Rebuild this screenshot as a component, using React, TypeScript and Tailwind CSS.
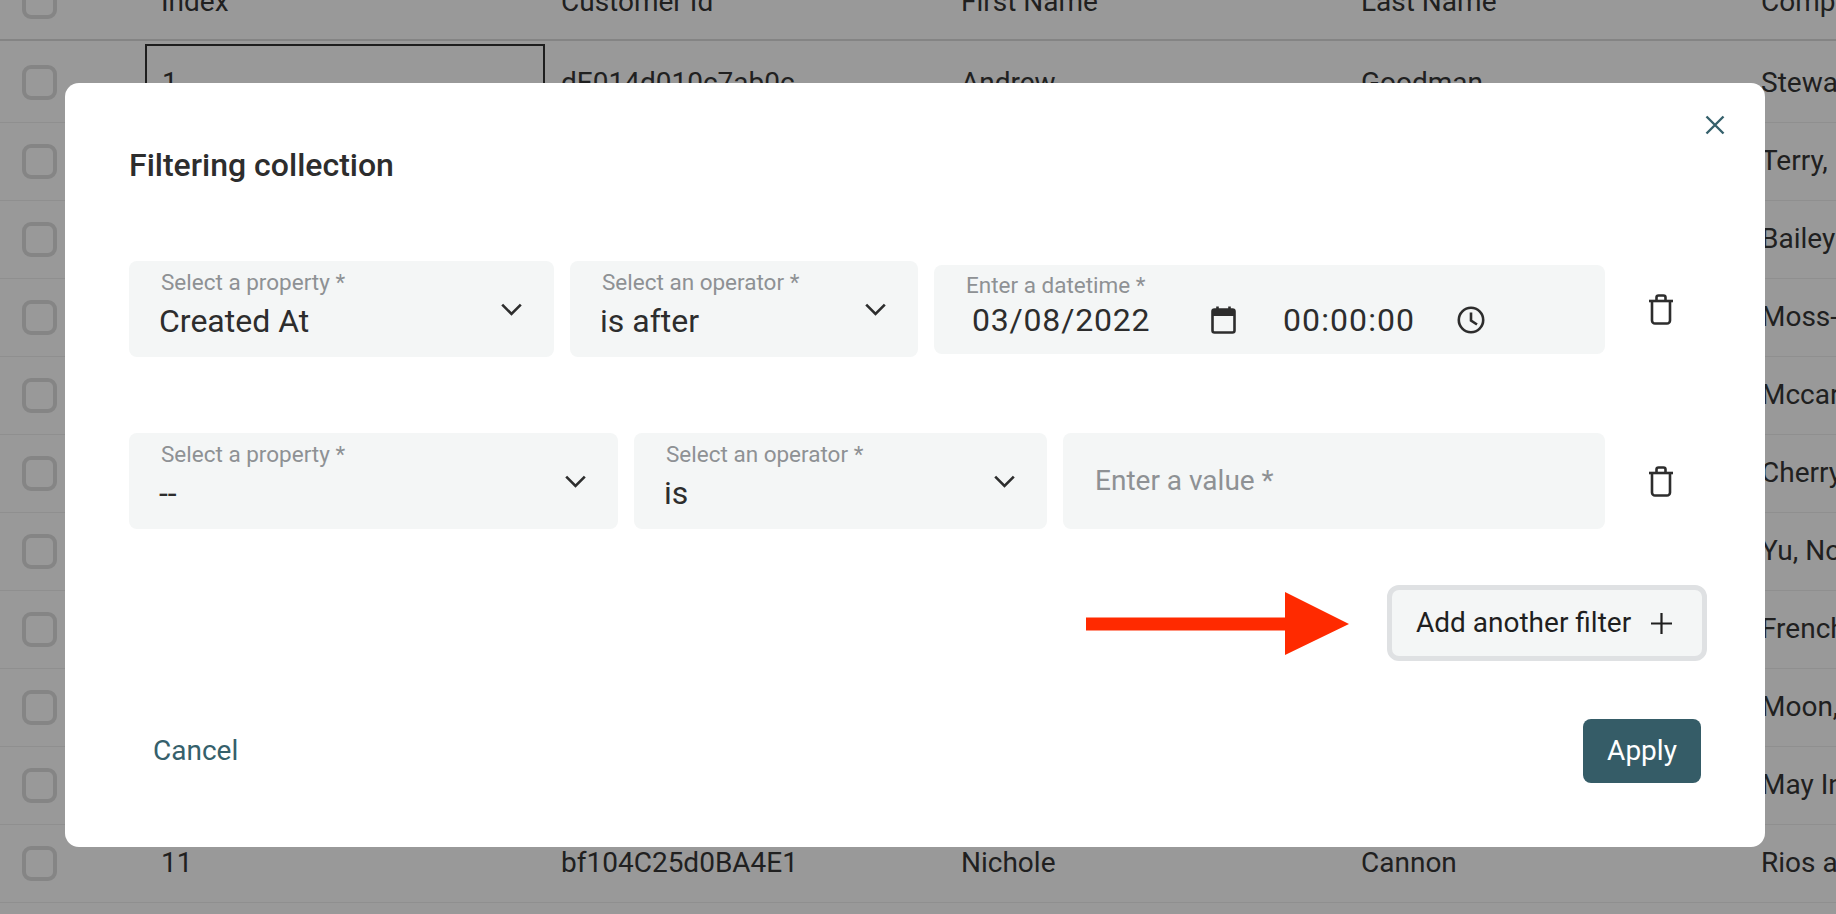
import React from "react"

const rows = [
    { index: "1", customerId: "dE014d010c7ab0c", first: "Andrew", last: "Goodman", company: "Stewart-Flynn" },
    { index: "2", customerId: "2B54172c8b65eC3", first: "Alvin", last: "Lane", company: "Terry, Proctor and Lawrence" },
    { index: "3", customerId: "d794Dd48988d2ac", first: "Jenna", last: "Harding", company: "Bailey Group" },
    { index: "4", customerId: "3b3Aa4aCc68f3Be", first: "Fernando", last: "Ford", company: "Moss-Maxwell" },
    { index: "5", customerId: "D60df62ad2ae41E", first: "Kara", last: "Woods", company: "Mccarthy-Kelley" },
    { index: "6", customerId: "8aaa5d0CE9ee311", first: "Marissa", last: "Gamble", company: "Cherry and Sons" },
    { index: "7", customerId: "73B22Ac8A43DD1A", first: "Julie", last: "Cooley", company: "Yu, Norman and Sharp" },
    { index: "8", customerId: "BC91Bb2a5dBd7E1", first: "Lauren", last: "Villa", company: "French, Travis and Hensley" },
    { index: "9", customerId: "a9d3Ba2A16a3Bd7", first: "Bradley", last: "Hall", company: "Moon, Holt and Dean" },
    { index: "10", customerId: "6D13a6D4FbDd4e2", first: "Gail", last: "Rowe", company: "May Inc" },
    { index: "11", customerId: "bf104C25d0BA4E1", first: "Nichole", last: "Cannon", company: "Rios and Sons" },
]

function Checkbox() {
    return <div className="w-[35px] h-[35px] rounded-[9px] border-[4px] border-[#dedede]" />
}

function Chevron() {
    return (
        <svg width="21" height="13" viewBox="0 0 21 13" fill="none" stroke="#2d2d2d" strokeWidth="2.6" className="shrink-0">
            <path d="M1.2 1.6 L10.5 11 L19.8 1.6" />
        </svg>
    )
}

function Trash() {
    return (
        <svg width="26" height="31" viewBox="0 0 26 31" fill="none" stroke="#2d2d2d" strokeWidth="2.6" strokeLinejoin="round">
            <path d="M1 7 H25" />
            <path d="M8.5 7 V3.5 a2 2 0 0 1 2 -2 h5 a2 2 0 0 1 2 2 V7" />
            <path d="M4 7 V26.5 a3 3 0 0 0 3 3 h12 a3 3 0 0 0 3 -3 V7" />
        </svg>
    )
}

function SelectField({ label, value, width }: { label: string; value: string; width: string }) {
    return (
        <div className={`${width} h-[96px] rounded-[8px] bg-[#f4f6f6] pl-[32px] pr-[32px] flex items-center justify-between`}>
            <div className="self-start pt-[8px]">
                <div className="h-[26px] leading-[26px] text-[22.5px] text-[#8e9194]">{label}</div>
                <div className="mt-[7px] -ml-[2px] h-[38px] leading-[38px] text-[32px] text-[#2d2d2d]">{value}</div>
            </div>
            <Chevron />
        </div>
    )
}

function Table() {
    return (
        <div className="-mt-[36px] text-[28px] text-[#363636]">
            <div className="flex items-center h-[77px] border-b-2 border-[#dddddd]">
                <div className="w-[146px] shrink-0 pl-[22px]"><Checkbox /></div>
                <div className="w-[400px] shrink-0 pl-[15px]">Index</div>
                <div className="w-[400px] shrink-0 pl-[15px]">Customer Id</div>
                <div className="w-[400px] shrink-0 pl-[15px]">First Name</div>
                <div className="w-[400px] shrink-0 pl-[15px] whitespace-nowrap">Last Name</div>
                <div className="pl-[15px] whitespace-nowrap">Company</div>
            </div>
            {rows.map((row, i) => (
                <div key={row.index} className={`flex items-center border-b border-[#eeeeee] ${i === 0 ? "h-[81.5px] pt-[3px]" : "h-[78px]"}`}>
                    <div className="w-[146px] shrink-0 pl-[22px]"><Checkbox /></div>
                    <div className={`w-[400px] shrink-0 h-full flex items-center ${i === 0 ? "border-2 border-[#333333] -ml-px mr-px pl-[15px]" : "pl-[15px]"}`}>{row.index}</div>
                    <div className="w-[400px] shrink-0 pl-[15px]">{row.customerId}</div>
                    <div className="w-[400px] shrink-0 pl-[15px]">{row.first}</div>
                    <div className="w-[400px] shrink-0 pl-[15px]">{row.last}</div>
                    <div className="pl-[15px] whitespace-nowrap">{row.company}</div>
                </div>
            ))}
        </div>
    )
}

export default function App() {
    return (
        <div className="relative w-full h-[914px] overflow-hidden bg-white font-['Roboto',sans-serif]">
            <Table />
            <div className="absolute inset-0 bg-black/40 pt-[83px] pl-[65px]">
                <div className="relative w-[1700px] h-[764px] rounded-[14px] bg-white pl-[64px] pt-[64px]">
                    <button className="absolute right-[40px] top-[32px] text-[#35606b]">
                        <svg width="20" height="20" viewBox="0 0 20 20" fill="none" stroke="currentColor" strokeWidth="2.4">
                            <path d="M1.5 1.5 L18.5 18.5 M18.5 1.5 L1.5 18.5" />
                        </svg>
                    </button>

                    <h2 className="h-[36px] leading-[36px] text-[32px] font-medium text-[#2d2d2d]">Filtering collection</h2>

                    <div className="mt-[78px] flex items-center h-[96px]">
                        <div className="flex items-center gap-[16px] w-[1476px]">
                            <SelectField label="Select a property *" value="Created At" width="w-[425px]" />
                            <SelectField label="Select an operator *" value="is after" width="w-[348px]" />
                            <div className="flex-1 h-[89px] rounded-[8px] bg-[#f4f6f6] pt-[7px]">
                                <div className="pl-[32px] h-[26px] leading-[26px] text-[22.5px] text-[#8e9194]">Enter a datetime *</div>
                                <div className="mt-[3px] pl-[38px] h-[38px] flex items-center text-[32px] leading-[38px] text-[#2d2d2d]">
                                    <span className="w-[178px] tracking-[0.8px]">03/08/2022</span>
                                    <svg width="25" height="28" viewBox="0 0 25 28" fill="none" className="ml-[61px]">
                                        <rect x="1.5" y="3.5" width="22" height="23" rx="2" stroke="#2d2d2d" strokeWidth="2.6" />
                                        <rect x="1.5" y="3.5" width="22" height="6.5" fill="#2d2d2d" />
                                        <path d="M6.5 0.5 V4 M18.5 0.5 V4" stroke="#2d2d2d" strokeWidth="2.6" />
                                    </svg>
                                    <span className="ml-[47px] w-[132px] tracking-[1.1px]">00:00:00</span>
                                    <svg width="28" height="28" viewBox="0 0 28 28" fill="none" stroke="#2d2d2d" strokeWidth="2.6" className="ml-[42px]">
                                        <circle cx="14" cy="14" r="12.2" />
                                        <path d="M14 6.5 V14.5 L20 18.5" />
                                    </svg>
                                </div>
                            </div>
                        </div>
                        <div className="ml-[43px]"><Trash /></div>
                    </div>

                    <div className="mt-[76px] flex items-center h-[96px]">
                        <div className="flex items-center gap-[16px] w-[1476px]">
                            <SelectField label="Select a property *" value="--" width="w-[489px]" />
                            <SelectField label="Select an operator *" value="is" width="w-[413px]" />
                            <div className="flex-1 h-[96px] rounded-[8px] bg-[#f4f6f6] pl-[32px] flex items-center text-[28px] text-[#8e9194]">Enter a value *</div>
                        </div>
                        <div className="ml-[43px]"><Trash /></div>
                    </div>

                    <div className="mt-[56px] flex justify-end pr-[58px]">
                        <button className="w-[320px] h-[76px] rounded-[12px] border-[5px] border-[#dfe1e3] bg-[#f4f6f6] flex items-center pl-[24px] text-[28px] text-[#1f1f1f]">
                            <span>Add another filter</span>
                            <svg width="21" height="21" viewBox="0 0 21 21" fill="none" stroke="#1f1f1f" strokeWidth="2.2" className="ml-[20px]">
                                <path d="M10.5 0 V21 M0 10.5 H21" />
                            </svg>
                        </button>
                    </div>

                    <div className="mt-[58px] flex items-center justify-between pr-[64px]">
                        <button className="ml-[24px] text-[28px] text-[#35606b]">Cancel</button>
                        <button className="w-[118px] h-[64px] rounded-[8px] bg-[#355c67] text-[28px] text-white">Apply</button>
                    </div>

                    <svg width="263" height="64" viewBox="0 0 263 64" className="absolute left-[1021px] top-[509px]">
                        <path d="M0 25.5 H199 V0 L263 32 L199 63 V38.5 H0 Z" fill="#ff2a00" />
                    </svg>
                </div>
            </div>
        </div>
    )
}
